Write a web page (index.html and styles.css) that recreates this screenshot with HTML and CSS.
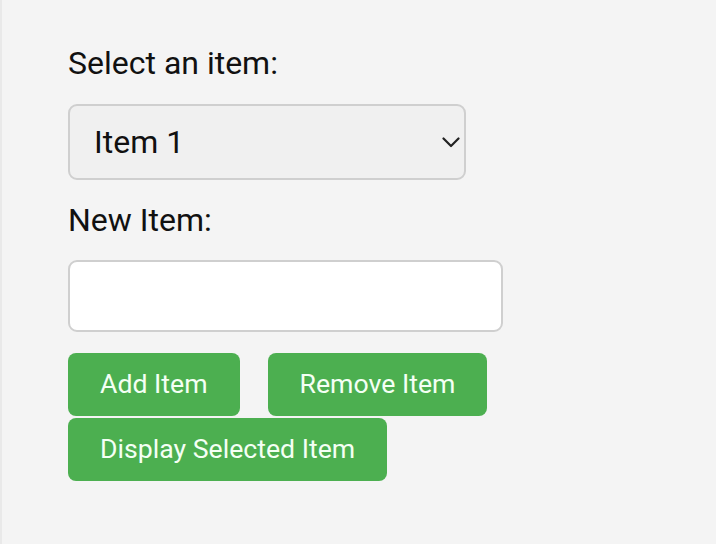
FILE: index.html
```html
<!DOCTYPE html>
<html>
<head>
<meta charset="utf-8">
<link rel="stylesheet" href="styles.css">
</head>
<body>
<div class="page">
  <form class="form">
    <label class="label" for="items">Select an item:</label>
    <div class="select-wrap">
      <select id="items" class="select">
        <option>Item 1</option>
        <option>Item 2</option>
        <option>Item 3</option>
      </select>
      <svg class="chevron" width="18" height="11" viewBox="0 0 18 11"><path d="M1.5 1.5 L9 9 L16.5 1.5" fill="none" stroke="#222" stroke-width="2.2" stroke-linecap="round" stroke-linejoin="round"/></svg>
    </div>
    <label class="label" for="newItem">New Item:</label>
    <input id="newItem" class="input" type="text">
    <div class="buttons">
      <button type="button" class="btn">Add Item</button>
      <button type="button" class="btn">Remove Item</button>
      <button type="button" class="btn">Display Selected Item</button>
    </div>
  </form>
</div>
</body>
</html>
```

FILE: styles.css
```css
html, body {
  margin: 0;
  padding: 0;
  background: #f4f4f4;
}
body {
  font-family: Roboto, "Noto Sans", sans-serif;
  width: 716px;
  height: 544px;
  overflow: hidden;
}
.page {
  box-sizing: border-box;
  height: 544px;
  border-left: 2px solid #e9e9e9;
  padding: 45px 0 0 66px;
}
.form {
  display: flex;
  flex-direction: column;
  align-items: flex-start;
  gap: 21.5px;
}
.label {
  display: block;
  font-size: 32px;
  line-height: 37.5px;
  color: #111;
}
.select-wrap {
  position: relative;
  width: 398px;
  height: 76px;
}
.select {
  appearance: none;
  -webkit-appearance: none;
  box-sizing: border-box;
  width: 398px;
  height: 76px;
  margin: 0;
  padding: 0 0 0 24px;
  border: 2px solid #cfcfcf;
  border-radius: 9px;
  background: #f0f0f0;
  font-family: Roboto, "Noto Sans", sans-serif;
  font-size: 32px;
  color: #111;
  outline: none;
}
.chevron {
  position: absolute;
  left: 374px;
  top: 33px;
  pointer-events: none;
}
.input {
  box-sizing: border-box;
  width: 435px;
  height: 72px;
  margin: -1px 0 0 0;
  border: 2px solid #cfcfcf;
  border-radius: 9px;
  background: #ffffff;
  font-family: Roboto, "Noto Sans", sans-serif;
  font-size: 32px;
  padding: 0 16px;
  outline: none;
}
.buttons {
  display: flex;
  flex-wrap: wrap;
  width: 435px;
  column-gap: 28px;
  row-gap: 2px;
  margin-top: 0;
}
.btn {
  box-sizing: border-box;
  height: 63px;
  margin: 0;
  padding: 0 32px;
  border: none;
  border-radius: 8px;
  background: #4caf50;
  color: #f4fff4;
  font-family: Roboto, "Noto Sans", sans-serif;
  font-size: 26.67px;
  line-height: 31px;
  cursor: pointer;
}
```
